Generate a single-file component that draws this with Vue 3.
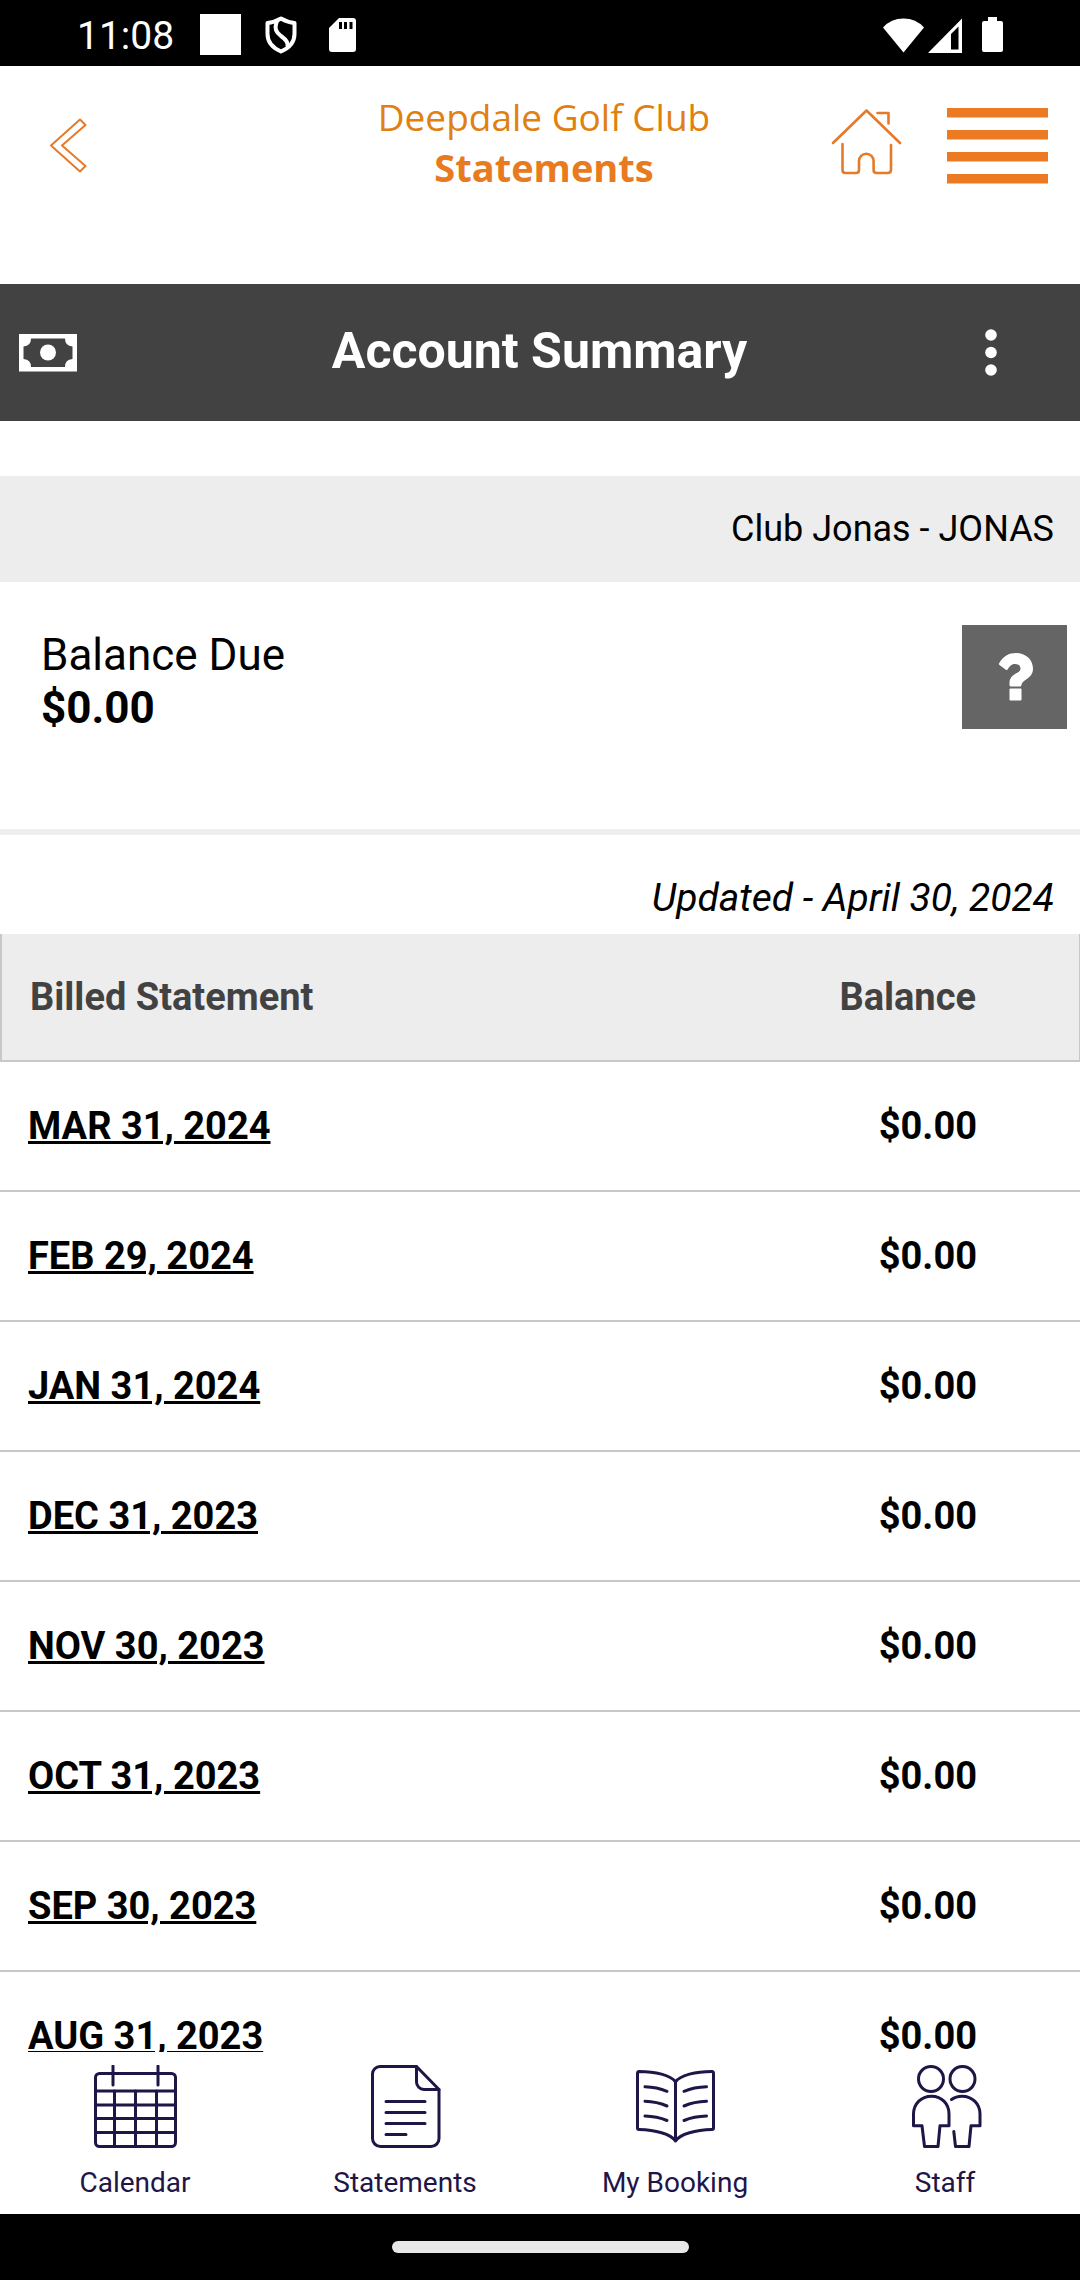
<script setup>
const statements = [
  { date: 'MAR 31, 2024', balance: '$0.00' },
  { date: 'FEB 29, 2024', balance: '$0.00' },
  { date: 'JAN 31, 2024', balance: '$0.00' },
  { date: 'DEC 31, 2023', balance: '$0.00' },
  { date: 'NOV 30, 2023', balance: '$0.00' },
  { date: 'OCT 31, 2023', balance: '$0.00' },
  { date: 'SEP 30, 2023', balance: '$0.00' },
  { date: 'AUG 31, 2023', balance: '$0.00' },
]

const tabs = [
  {
    label: 'Calendar',
    paths: [
      'M6.500 8.500H78.500a4 4 0 0 1 4 4V77.500a4 4 0 0 1-4 4H6.500a4 4 0 0 1-4-4V12.500a4 4 0 0 1 4-4Z',
      'M20 1V20M65 1V20',
      'M2.500 26H82.500M2.500 40H82.500M2.500 53.500H82.500M2.500 67.500H82.500',
      'M21.500 26V81M42.500 26V81M63.500 26V81',
    ],
  },
  {
    label: 'Statements',
    paths: [
      'M53.500 1.500H17a7.500 7.500 0 0 0-7.500 7.500V73.500a8 8 0 0 0 8 8H68a8 8 0 0 0 8-8V24.500Z',
      'M53.500 1.500V17a7.500 7.500 0 0 0 7.500 7.500H76',
      'M23 36.500H62M23 47.500H62M23 58.500H62M23 69.500H43',
    ],
  },
  {
    label: 'My Booking',
    paths: [
      'M42.500 17C38 10 22 6.500 6 6.500Q4.500 6.500 4.500 8.500V63Q4.500 64.500 6 64.500C22 65 38 69 42.500 76C47 69 63 65 79 64.500Q80.500 64.500 80.500 63V8.500Q80.500 6.500 79 6.500C63 6.500 47 10 42.500 17V76',
      'M12 21.700Q24 22 34 26.300M12 36.300Q24 36.700 34 41M12 51Q24 51.300 34 55.500',
      'M73.500 21.700Q61 22 51 26.300M73.500 36.300Q61 36.700 51 41M73.500 51Q61 51.300 51 55.500',
    ],
  },
  {
    label: 'Staff',
    paths: [
      'M15.500 14a12.500 12.500 0 1 0 25 0a12.500 12.500 0 1 0-25 0',
      'M47 14a12.500 12.500 0 1 0 25 0a12.500 12.500 0 1 0-25 0',
      'M28.500 31.200C18 31.200 10.500 39 10.500 49V60.700H19L21.500 81.500H35L37 60.700H46V49C46 39 39 31.200 28.500 31.200Z',
      'M48.500 34.500C51.500 32.200 55 31.200 59 31.200C69.500 31.200 77 39 77 49V60.700H68L66 81.500H52.500L50.800 66.500',
    ],
  },
]
</script>

<template>
  <div class="screen">
    <div class="status-bar">
      <div class="status-group">
        <span class="clock">11:08</span>
        <span class="status-square"></span>
        <svg class="shield" width="32" height="38" viewBox="0 0 32 38" fill="none" stroke="#fff" stroke-width="4" stroke-linejoin="round">
          <path d="M16 2.500Q9 6.500 2.500 7V18C2.500 26 8 32 16 35.500C24 32 29.500 26 29.500 18V7Q23 6.500 16 2.500Z" />
          <path d="M12 5C9 13 11 16 16 20C23 25 24 28 22 31" />
        </svg>
        <svg class="sd" width="28" height="36" viewBox="0 0 28 36">
          <path fill="#fff" d="M10 1H24a3 3 0 0 1 3 3V32a3 3 0 0 1-3 3H3a3 3 0 0 1-3-3V11Z" />
          <path stroke="#000" stroke-width="3" d="M11.500 5V12M16.500 5V12M22 5V12" />
        </svg>
      </div>
      <svg width="122" height="36" viewBox="0 0 122 36" fill="#fff">
        <path d="M1 10.500Q9 1.500 21.500 1.500T42 10.500L21.500 35.500Z" />
        <path fill-rule="evenodd" d="M46 36L80 1.500V36ZM69 17V32.500H76.500V9.500Z" />
        <path d="M106 0H115V4H119a2 2 0 0 1 2 2V33a2 2 0 0 1-2 2H102a2 2 0 0 1-2-2V6a2 2 0 0 1 2-2H106Z" />
      </svg>
    </div>

    <header class="app-header">
      <div class="side">
        <button class="icon-button back" type="button" aria-label="Back">
          <svg width="38" height="70" viewBox="0 0 38 70" fill="none" stroke="#e67a28" stroke-width="2" stroke-linejoin="round">
            <path d="M1 38.500L30 12.500L35.500 18L12 38.500L35.500 59L30 64.500Z" />
          </svg>
        </button>
      </div>
      <div class="titles">
        <div class="club">Deepdale Golf Club</div>
        <h1 class="page-name">Statements</h1>
      </div>
      <div class="side actions">
        <button class="icon-button" type="button" aria-label="Home">
          <svg width="71" height="68" viewBox="0 0 71 68" fill="none" stroke="#e67a28" stroke-width="2.600" stroke-linecap="round" stroke-linejoin="round">
            <path d="M2 35L35.500 2.500L69 35M46.500 5H57.500V15.500" />
            <path d="M11.500 36V62Q11.500 65 14.500 65H25Q28 65 28 62V53a7.300 7.300 0 0 1 14.600 0V62Q42.600 65 45.600 65H56.500Q60 65 60 62V37" />
          </svg>
        </button>
        <button class="icon-button" type="button" aria-label="Menu">
          <svg width="101" height="84" viewBox="0 0 101 84" fill="#eb7a22">
            <path d="M0 8H101V17.500H0ZM0 30H101V39.500H0ZM0 52H101V61.500H0ZM0 74H101V83.500H0Z" />
          </svg>
        </button>
      </div>
    </header>

    <main class="content">
      <div class="banner">
        <svg width="58" height="38" viewBox="0 0 58 38">
          <path fill="#fff" fill-rule="evenodd" d="M0 0H58V37.500H0ZM12 4.500Q12 12 4.500 12.500V25Q12 25.500 12 33H46Q46 25.500 53.500 25V12.500Q46 12 46 4.500Z" />
          <circle cx="29" cy="18.500" r="8" fill="#fff" />
        </svg>
        <h2 class="banner-title">Account Summary</h2>
        <button class="icon-button more" type="button" aria-label="More options">
          <svg width="12" height="47" viewBox="0 0 12 47" fill="#fff">
            <circle cx="6" cy="6" r="5.800" />
            <circle cx="6" cy="23.500" r="5.800" />
            <circle cx="6" cy="41" r="5.800" />
          </svg>
        </button>
      </div>

      <div class="member">Club Jonas - JONAS</div>

      <section class="due">
        <div class="due-text">
          <div>Balance Due</div>
          <div class="due-amount">$0.00</div>
        </div>
        <button class="icon-button help" type="button" aria-label="Help">
          <svg width="36" height="50" viewBox="0 0 36 50" fill="#fff">
            <path d="M1 11.500C5 4 11 1 18 1C28 1 35 8 35 16.500C35 27 25 26.500 23.500 33Q23 34.500 22 34.500H13Q11.500 34.500 11.500 33V30.500C12 21 22.500 22 22.500 16.500C22.500 13.500 20 12 17 12C13 12 11.500 14.500 9.500 17.500Q8.500 18.500 7.500 17.500L1.500 13Q.5 12.500 1 11.500Z" />
            <rect x="11.500" y="36.500" width="12" height="12" rx="1" />
          </svg>
        </button>
      </section>

      <p class="updated">Updated - April 30, 2024</p>

      <table class="statements">
        <thead>
          <tr>
            <th scope="col">Billed Statement</th>
            <th scope="col" class="amount">Balance</th>
          </tr>
        </thead>
        <tbody>
          <tr v-for="row in statements" :key="row.date">
            <td><a href="#">{{ row.date }}</a></td>
            <td class="amount">{{ row.balance }}</td>
          </tr>
        </tbody>
      </table>
    </main>

    <nav class="tabs">
      <a v-for="tab in tabs" :key="tab.label" class="tab" href="#">
        <svg width="84" height="84" viewBox="0 0 84 84" fill="none" stroke="#1f1547" stroke-width="3" stroke-linecap="round" stroke-linejoin="round">
          <path v-for="d in tab.paths" :key="d" :d="d" />
        </svg>
        <span>{{ tab.label }}</span>
      </a>
    </nav>

    <div class="gesture-bar"><span class="pill"></span></div>
  </div>
</template>

<style>
body {
  margin: 0;
  background: #fff;
}
</style>

<style scoped>
.screen {
  display: flex;
  flex-direction: column;
  height: 100vh;
  font-family: Roboto, "Liberation Sans", sans-serif;
  color: #000;
  background: #fff;
}

.icon-button {
  display: flex;
  align-items: center;
  justify-content: center;
  padding: 0;
  border: 0;
  background: none;
  cursor: pointer;
}

.status-bar {
  display: flex;
  align-items: center;
  justify-content: space-between;
  flex: none;
  box-sizing: border-box;
  height: 66px;
  padding: 3px 76px 0;
  background: #000;
  color: #fff;
}

.status-group {
  display: flex;
  align-items: center;
}

.clock {
  width: 123px;
  padding-left: 1px;
  padding-top: 2px;
  font-size: 39px;
  line-height: 48px;
}

.status-square {
  width: 41px;
  height: 41px;
  margin-right: 24px;
  background: #fff;
}

.shield {
  margin-right: 32px;
}

.app-header {
  display: grid;
  grid-template-columns: 1fr auto 1fr;
  align-items: center;
  flex: none;
  padding: 25px 32px 91px 40px;
  color: #e87a20;
}

.side {
  display: flex;
  align-items: center;
}

.back {
  padding: 0 10px;
}

.actions {
  justify-content: flex-end;
  gap: 45px;
}

.titles {
  font-family: "Open Sans", sans-serif;
  line-height: 51px;
  text-align: center;
}

.club {
  font-size: 37px;
  color: #e08010;
}

.page-name {
  margin: 0;
  font-size: 38px;
  font-weight: 700;
}

.content {
  flex: 1;
  min-height: 0;
  overflow: hidden;
}

.banner {
  display: grid;
  grid-template-columns: 1fr auto 1fr;
  align-items: center;
  padding: 38px 20px 38px 19px;
  background: #424242;
  color: #fff;
}

.banner-title {
  margin: 0;
  padding-bottom: 2px;
  font-size: 50px;
  font-weight: 700;
  line-height: 59px;
}

.more {
  justify-self: end;
  padding: 0 63px;
}

.member {
  margin-top: 55px;
  padding: 32px 26px;
  background: #ededed;
  font-size: 36px;
  line-height: 42px;
  text-align: right;
}

.due {
  display: flex;
  align-items: flex-start;
  justify-content: space-between;
  padding: 43px 13px 94px 41px;
  border-bottom: 6px solid #eee;
}

.due-text {
  padding-top: 4px;
  font-size: 44px;
  line-height: 53px;
}

.due-amount {
  font-weight: 700;
}

.help {
  box-sizing: border-box;
  width: 105px;
  height: 104px;
  padding-left: 2px;
  background: #656565;
}

.updated {
  margin: 0;
  padding: 41px 26px 14px;
  font-size: 39px;
  font-style: italic;
  line-height: 44px;
  text-align: right;
}

.statements {
  width: 100%;
  border-spacing: 0;
  font-size: 38px;
  line-height: 44px;
}

.statements th,
.statements td {
  padding: 42px 28px;
  border-bottom: 2px solid #c8c8c8;
  font-weight: 700;
  text-align: left;
}

.statements th {
  padding-top: 41px;
  padding-bottom: 41px;
  background: #ededed;
  color: #424242;
}

.statements th:first-child {
  border-left: 2px solid #c8c8c8;
}

.statements th:last-child {
  border-right: 1px solid #c8c8c8;
}

.statements .amount {
  padding-right: 103px;
  text-align: right;
}

.statements a {
  color: #000;
  text-decoration: underline;
  text-decoration-thickness: 3px;
  text-underline-offset: 2px;
}

.tabs {
  display: grid;
  grid-template-columns: repeat(4, 1fr);
  flex: none;
  padding: 13px 0 15px;
  background: #fff;
}

.tab {
  display: flex;
  flex-direction: column;
  align-items: center;
  gap: 18px;
  color: #1f1547;
  font-size: 28px;
  line-height: 32px;
  text-decoration: none;
}

.gesture-bar {
  display: flex;
  align-items: center;
  justify-content: center;
  flex: none;
  height: 66px;
  background: #000;
}

.pill {
  width: 297px;
  height: 12px;
  border-radius: 6px;
  background: #e8e8e8;
}
</style>
